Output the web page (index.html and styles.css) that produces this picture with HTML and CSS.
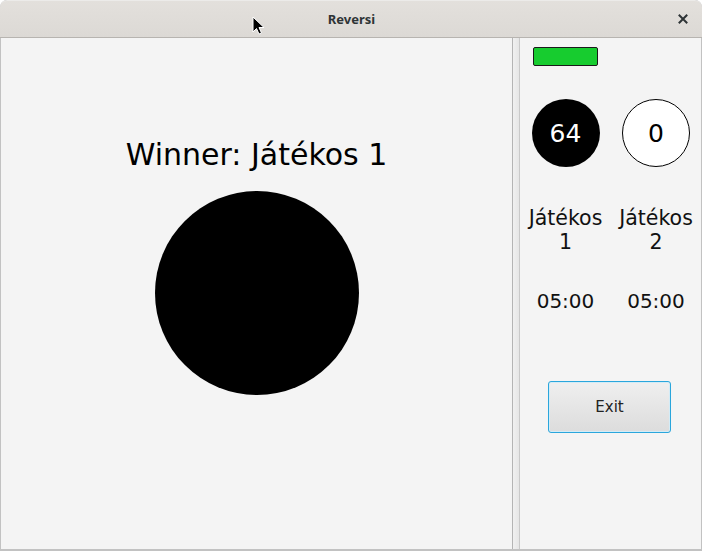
FILE: index.html
```html
<!DOCTYPE html>
<html>
<head>
<meta charset="utf-8">
<link rel="stylesheet" href="styles.css">
</head>
<body>
<div class="window">
  <div class="titlebar">
    <span class="title">Reversi</span>
    <svg class="close" width="10" height="10" viewBox="0 0 10 10">
      <path d="M1.5 1.5 L8.5 8.5 M8.5 1.5 L1.5 8.5" stroke="#2e3436" stroke-width="2" stroke-linecap="square"/>
    </svg>
  </div>
  <div class="content">
    <div class="board">
      <div class="winner">Winner: Játékos 1</div>
      <div class="big-disc"></div>
    </div>
    <div class="divider"></div>
    <div class="side">
      <div class="cell"><div class="turn"></div></div>
      <div class="cell"></div>
      <div class="cell"><div class="disc black">64</div></div>
      <div class="cell"><div class="disc white">0</div></div>
      <div class="cell name">Játékos<br>1</div>
      <div class="cell name">Játékos<br>2</div>
      <div class="cell time">05:00</div>
      <div class="cell time">05:00</div>
      <div class="btn-row"><button class="exit">Exit</button></div>
    </div>
  </div>
  <svg class="cursor" width="14" height="20" viewBox="0 0 14 20">
    <path d="M1 1 L1 16 L4.5 12.5 L7 18 L9.5 17 L7 11.5 L12 11.5 Z" fill="#000" stroke="#fff" stroke-width="1"/>
  </svg>
</div>
</body>
</html>
```
FILE: styles.css
```css
* { box-sizing: border-box; }
html, body { margin: 0; padding: 0; background: #ffffff; }
body { font-family: "DejaVu Sans", sans-serif; }
.window {
  position: relative;
  width: 702px;
  height: 551px;
  background: #c2c2c2;
  border-radius: 7px 7px 0 0;
  padding: 0 1px 2px 1px;
  display: flex;
  flex-direction: column;
  overflow: hidden;
}
.titlebar {
  height: 38px;
  margin: 0 -1px;
  background: linear-gradient(#e3e0dc, #dcd9d5);
  border-radius: 7px 7px 0 0;
  border-top: 1px solid #ecebe9;
  border-bottom: 1px solid #b7b4b0;
  display: flex;
  align-items: center;
  justify-content: center;
  position: relative;
}
.title {
  font-family: "Noto Sans", "DejaVu Sans", sans-serif;
  font-weight: bold;
  font-size: 13px;
  color: #2e3436;
  margin-left: 1px;
}
.close {
  position: absolute;
  right: 14px;
  top: 13px;
}
.content {
  flex: 1;
  display: flex;
  background: #f4f4f4;
}
.board {
  width: 511px;
  display: flex;
  flex-direction: column;
  align-items: center;
  padding-top: 97px;
}
.winner {
  font-size: 30px;
  line-height: 40px;
  color: #000;
}
.big-disc {
  margin-top: 16px;
  width: 204px;
  height: 204px;
  border-radius: 50%;
  background: #000;
}
.divider {
  width: 8px;
  border-left: 1px solid #b4b4b4;
  border-right: 1px solid #c9c9c9;
  background: linear-gradient(90deg, #f0f0f0, #e6e6e6);
}
.side {
  flex: 1;
  display: grid;
  grid-template-columns: 91px 90px;
  grid-template-rows: 52px 68px auto auto auto;
  align-content: start;
  padding-top: 9px;
}
.cell { display: flex; justify-content: center; align-items: flex-start; }
.turn {
  width: 65px;
  height: 19px;
  background: #17cc2f;
  border: 1px solid #1a1a1a;
  border-radius: 2px;
}
.disc {
  width: 68px;
  height: 68px;
  border-radius: 50%;
  display: flex;
  align-items: center;
  justify-content: center;
  font-size: 25px;
}
.disc.black { background: #000; color: #fff; }
.disc.white { background: #fff; color: #000; border: 1px solid #000; }
.name {
  font-size: 20.5px;
  line-height: 24px;
  text-align: center;
  color: #111;
  padding-top: 39px;
}
.time {
  font-size: 20px;
  line-height: 24px;
  color: #111;
  padding-top: 35px;
}
.btn-row {
  grid-column: 1 / 3;
  display: flex;
  justify-content: center;
  padding-top: 68px;
  padding-right: 2px;
}
.exit {
  width: 123px;
  height: 52px;
  border: 1px solid #2aa6dc;
  box-shadow: inset 0 0 0 1px #d3ecf7;
  border-radius: 3px;
  background: linear-gradient(#efefef, #dcdcdc);
  font-family: "DejaVu Sans", sans-serif;
  font-size: 15px;
  color: #222;
  padding: 0;
}
.cursor {
  position: absolute;
  left: 252px;
  top: 16px;
}
```
